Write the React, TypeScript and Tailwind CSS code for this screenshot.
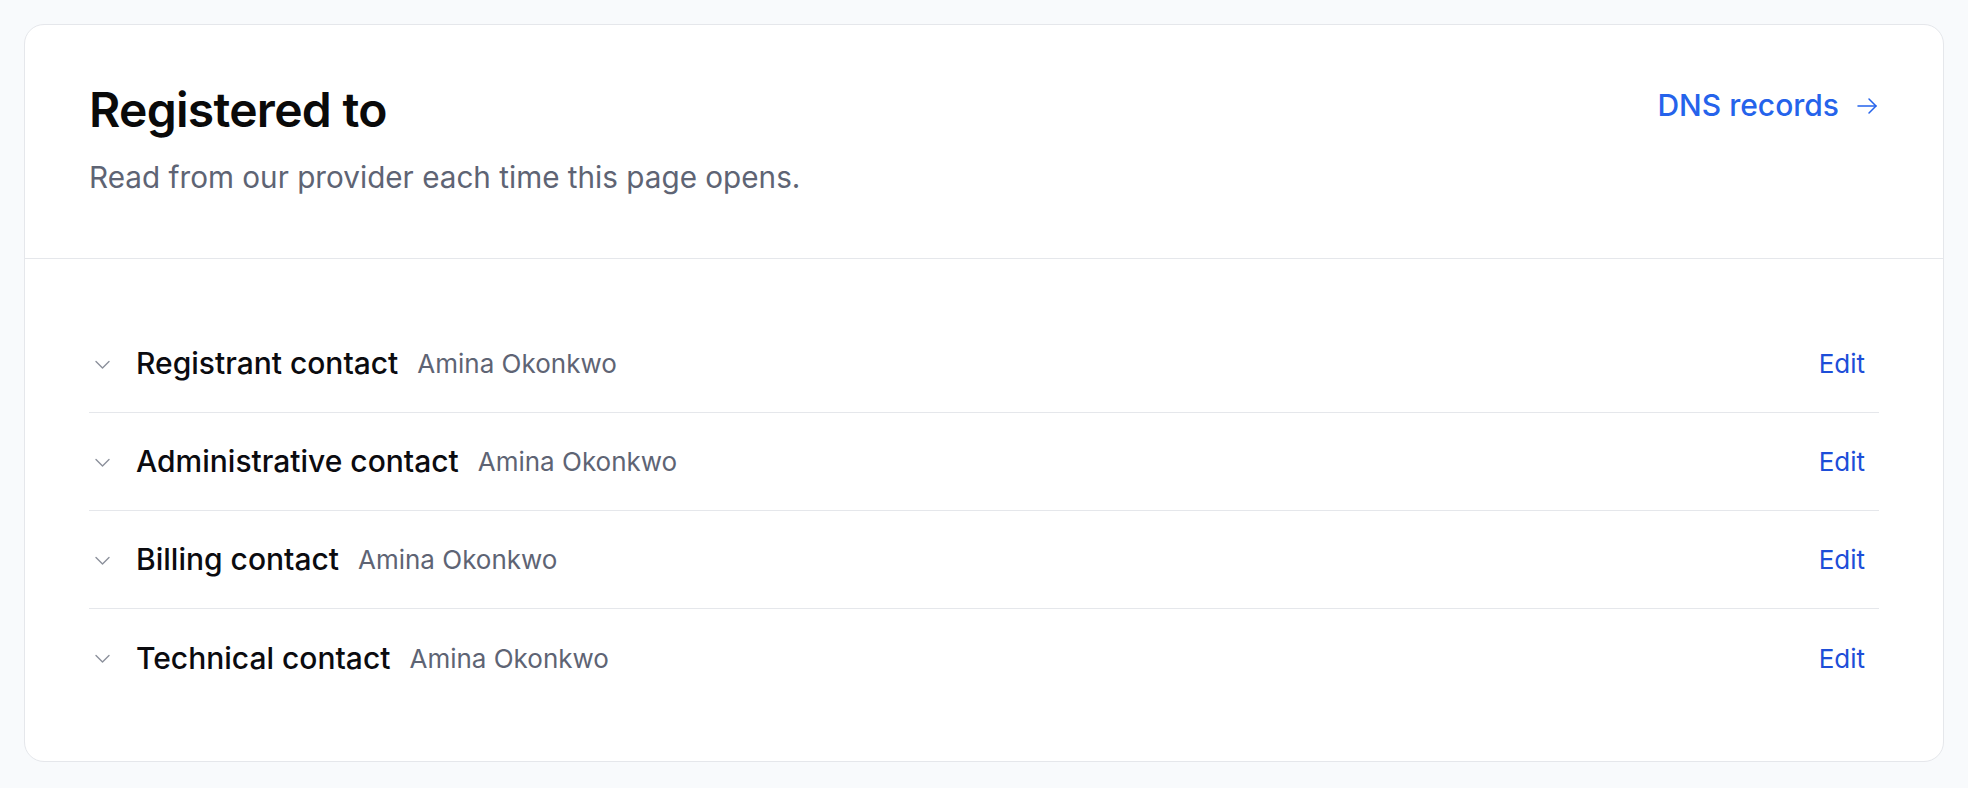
import React from 'react';

type Contact = {
  role: string;
  name: string;
};

const contacts: Contact[] = [
  { role: 'Registrant contact', name: 'Amina Okonkwo' },
  { role: 'Administrative contact', name: 'Amina Okonkwo' },
  { role: 'Billing contact', name: 'Amina Okonkwo' },
  { role: 'Technical contact', name: 'Amina Okonkwo' },
];

const ChevronDown: React.FC = () => (
  <svg
    width="24"
    height="24"
    viewBox="0 0 24 24"
    fill="none"
    stroke="currentColor"
    strokeWidth="1.4"
    strokeLinecap="round"
    strokeLinejoin="round"
    aria-hidden="true"
  >
    <path d="M7 9.5l6.5 6.5 6.5-6.5" />
  </svg>
);

const ArrowRight: React.FC = () => (
  <svg
    width="24"
    height="24"
    viewBox="0 0 24 24"
    fill="none"
    stroke="currentColor"
    strokeWidth="1.5"
    strokeLinecap="round"
    strokeLinejoin="round"
    aria-hidden="true"
  >
    <path d="M3 12h18" />
    <path d="M14 5l7 7-7 7" />
  </svg>
);

const ContactRow: React.FC<{ contact: Contact }> = ({ contact }) => (
  <div className="flex h-[98px] items-center">
    <button className="flex h-6 w-6 items-center justify-center text-[#8b909b]">
      <ChevronDown />
    </button>
    <span className="ml-[23px] text-[30px] font-medium text-[#0b0b0f]">{contact.role}</span>
    <span className="ml-[19px] text-[26px] text-[#5e6474]">{contact.name}</span>
    <button className="ml-auto pr-[14px] text-[26px] text-[#1d4ed8]">Edit</button>
  </div>
);

const App: React.FC = () => {
  return (
    <div
      className="min-h-screen bg-slate-50 p-6"
      style={{ fontFamily: 'Inter, "Noto Sans", sans-serif' }}
    >
      <section className="rounded-[20px] border border-gray-200 bg-white">
        <header className="flex items-start justify-between border-b border-gray-200 px-16 pt-14 pb-[58px]">
          <div>
            <h1 className="text-[48px] leading-[58px] font-semibold tracking-[-0.015em] text-[#0a0a0a]">
              Registered to
            </h1>
            <p className="mt-4 text-[29.7px] leading-[45px] text-[#5e6474]">
              Read from our provider each time this page opens.
            </p>
          </div>
          <a className="flex items-center gap-4 pt-[2px] text-[30px] leading-[45px] font-medium text-[#2563eb]">
            DNS records
            <ArrowRight />
          </a>
        </header>

        <div className="px-16 pt-14 pb-[54px]">
          <div className="divide-y divide-gray-200">
            {contacts.map((c) => (
              <ContactRow key={c.role} contact={c} />
            ))}
          </div>
        </div>
      </section>
    </div>
  );
};

export default App;
